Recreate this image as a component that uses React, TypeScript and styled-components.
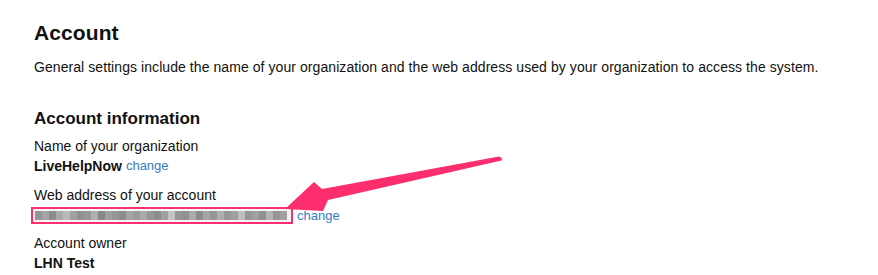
import styled, { createGlobalStyle } from "styled-components";

const GlobalStyle = createGlobalStyle`
  html, body {
    margin: 0;
    padding: 0;
    background: #ffffff;
  }
  body {
    font-family: "Liberation Sans", Arial, Helvetica, sans-serif;
    color: #111111;
  }
`;

const Page = styled.div`
  position: relative;
  width: 878px;
  height: 275px;
  overflow: hidden;
  padding: 21px 0 0 34px;
  box-sizing: border-box;
`;

const Title = styled.h1`
  margin: 0;
  font-size: 21px;
  line-height: 24px;
  font-weight: 700;
  letter-spacing: 0.1px;
`;

const Intro = styled.p`
  margin: 12px 0 0 0;
  font-size: 14px;
  line-height: 20px;
  letter-spacing: 0.07px;
`;

const SectionTitle = styled.h2`
  margin: 32px 0 0 0;
  font-size: 17px;
  line-height: 20px;
  font-weight: 700;
`;

const Fields = styled.div`
  margin-top: 7px;
  display: flex;
  flex-direction: column;
  gap: 9px;
`;

const Field = styled.div`
  display: flex;
  flex-direction: column;
`;

const Label = styled.div`
  font-size: 14px;
  line-height: 20px;
`;

const Value = styled.div<{ $boxed?: boolean }>`
  display: flex;
  align-items: center;
  gap: 4px;
  margin-top: ${({ $boxed }) => ($boxed ? "2px" : "0")};
  margin-left: ${({ $boxed }) => ($boxed ? "-3px" : "0")};
  font-size: 14px;
  line-height: ${({ $boxed }) => ($boxed ? "17px" : "20px")};
  font-weight: 700;
`;

const ChangeLink = styled.a`
  font-size: 13px;
  font-weight: 400;
  color: #3a7cc1;
  text-decoration: none;
  cursor: pointer;
`;

const Highlight = styled.div`
  display: flex;
  width: 262px;
  height: 17px;
  box-sizing: border-box;
  border: 2px solid #fd2e6e;
  padding: 2px;
  background: #f4f4f4;
`;

const Pixel = styled.span<{ $shade: number }>`
  flex: 0 0 7px;
  height: 9px;
  background: ${({ $shade }) => `rgb(${$shade}, ${$shade}, ${$shade})`};
`;

const Arrow = styled.svg`
  position: absolute;
  left: 0;
  top: 0;
  pointer-events: none;
`;

const shades = [
  150, 165, 140, 170, 185, 160, 145, 150, 175, 135, 160, 150, 140, 165, 155,
  170, 150, 140, 160, 195, 150, 145, 170, 140, 165, 150, 175, 150, 160, 190,
  150, 160, 145, 180, 150, 160,
];

const App = () => {
  return (
    <>
      <GlobalStyle />
      <Page>
        <Title>Account</Title>
        <Intro>
          General settings include the name of your organization and the web
          address used by your organization to access the system.
        </Intro>
        <SectionTitle>Account information</SectionTitle>
        <Fields>
          <Field>
            <Label>Name of your organization</Label>
            <Value>
              LiveHelpNow <ChangeLink>change</ChangeLink>
            </Value>
          </Field>
          <Field>
            <Label>Web address of your account</Label>
            <Value $boxed>
              <Highlight>
                {shades.map((s, i) => (
                  <Pixel key={i} $shade={s} />
                ))}
              </Highlight>
              <ChangeLink>change</ChangeLink>
            </Value>
          </Field>
          <Field>
            <Label>Account owner</Label>
            <Value>LHN Test</Value>
          </Field>
        </Fields>
        <Arrow width="878" height="275" viewBox="0 0 878 275">
          <path
            d="M285 209 L314 182 L322 189 L499 156.5 Q503 157.5 501.5 160.5 L328 200 L323 211 Z"
            fill="#fd2e6e"
            strokeLinejoin="round"
          />
        </Arrow>
      </Page>
    </>
  );
};

export default App;
